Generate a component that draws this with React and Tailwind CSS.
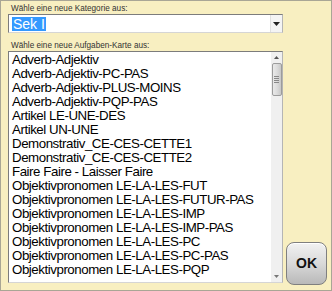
import React from "react";

const items = [
  "Adverb-Adjektiv",
  "Adverb-Adjektiv-PC-PAS",
  "Adverb-Adjektiv-PLUS-MOINS",
  "Adverb-Adjektiv-PQP-PAS",
  "Artikel LE-UNE-DES",
  "Artikel UN-UNE",
  "Demonstrativ_CE-CES-CETTE1",
  "Demonstrativ_CE-CES-CETTE2",
  "Faire Faire - Laisser Faire",
  "Objektivpronomen LE-LA-LES-FUT",
  "Objektivpronomen LE-LA-LES-FUTUR-PAS",
  "Objektivpronomen LE-LA-LES-IMP",
  "Objektivpronomen LE-LA-LES-IMP-PAS",
  "Objektivpronomen LE-LA-LES-PC",
  "Objektivpronomen LE-LA-LES-PC-PAS",
  "Objektivpronomen LE-LA-LES-PQP",
];

export default function App() {
  return (
    <div className="flex h-[291px] w-[332px] border border-[#a9a695] bg-[#f8efc1] font-['Liberation_Sans',Arial,sans-serif]">
      <div className="w-[285px] pl-[7px] pt-[3px]">
        <div className="pl-[3px] text-[8.2px] leading-[10px] text-[#333]">
          Wähle eine neue Kategorie aus:
        </div>
        <div className="flex h-[19px] w-[275px] border border-t-[#7c7c7c] border-l-[#7c7c7c] border-r-[#b5b5b5] border-b-[#d5d5d5] bg-white">
          <div className="flex flex-1 items-center pl-[3px]">
            <span className="bg-[#3399ff] px-[1px] text-[14px] leading-[14px] text-white">
              Sek I
            </span>
          </div>
          <div className="flex w-[12px] items-center justify-center border-l border-[#e0e0e0] bg-[#f4f4f4]">
            <svg width="7" height="4" viewBox="0 0 7 4">
              <path d="M0 0h7L3.5 4z" fill="#222" />
            </svg>
          </div>
        </div>
        <div className="mt-[8px] pl-[3px] text-[8.2px] leading-[10px] text-[#333]">
          Wähle eine neue Aufgaben-Karte aus:
        </div>
        <div className="flex h-[232px] w-[275px] border border-t-[#7c7c7c] border-l-[#7c7c7c] border-r-[#b5b5b5] border-b-[#d5d5d5] bg-white">
          <div className="flex-1 overflow-hidden pl-[3px] pt-[1px] text-[13.3px] leading-[14px] tracking-[-0.45px] text-black">
            {items.map((t) => (
              <div key={t} className="whitespace-nowrap">
                {t}
              </div>
            ))}
          </div>
          <div className="flex w-[11px] flex-col items-center bg-[#f0f0f0]">
            <div className="flex h-[11px] items-center justify-center">
              <svg width="5" height="3" viewBox="0 0 5 3">
                <path d="M0 3h5L2.5 0z" fill="#555" />
              </svg>
            </div>
            <div className="flex h-[33px] w-[10px] flex-col items-center justify-center gap-[1px] rounded-[2px] border border-[#9c9c9c] bg-gradient-to-r from-[#e9e9e9] via-[#dcdcdc] to-[#c8c8c8]">
              <div className="h-px w-[5px] bg-[#888]" />
              <div className="h-px w-[5px] bg-[#888]" />
              <div className="h-px w-[5px] bg-[#888]" />
              <div className="h-px w-[5px] bg-[#888]" />
            </div>
            <div className="flex-1" />
            <div className="flex h-[11px] items-center justify-center">
              <svg width="5" height="3" viewBox="0 0 5 3">
                <path d="M0 0h5L2.5 3z" fill="#777" />
              </svg>
            </div>
          </div>
        </div>
      </div>
      <div className="flex flex-1 flex-col justify-end pb-[5px]">
        <button className="h-[43px] w-[41px] rounded-[8px] border border-[#7f7f7f] bg-gradient-to-b from-[#f2f2f2] via-[#d9d9d9] to-[#b9b9b9] text-[14px] font-bold text-[#111] shadow-[inset_0_1px_0_#fff]">
          OK
        </button>
      </div>
    </div>
  );
}
